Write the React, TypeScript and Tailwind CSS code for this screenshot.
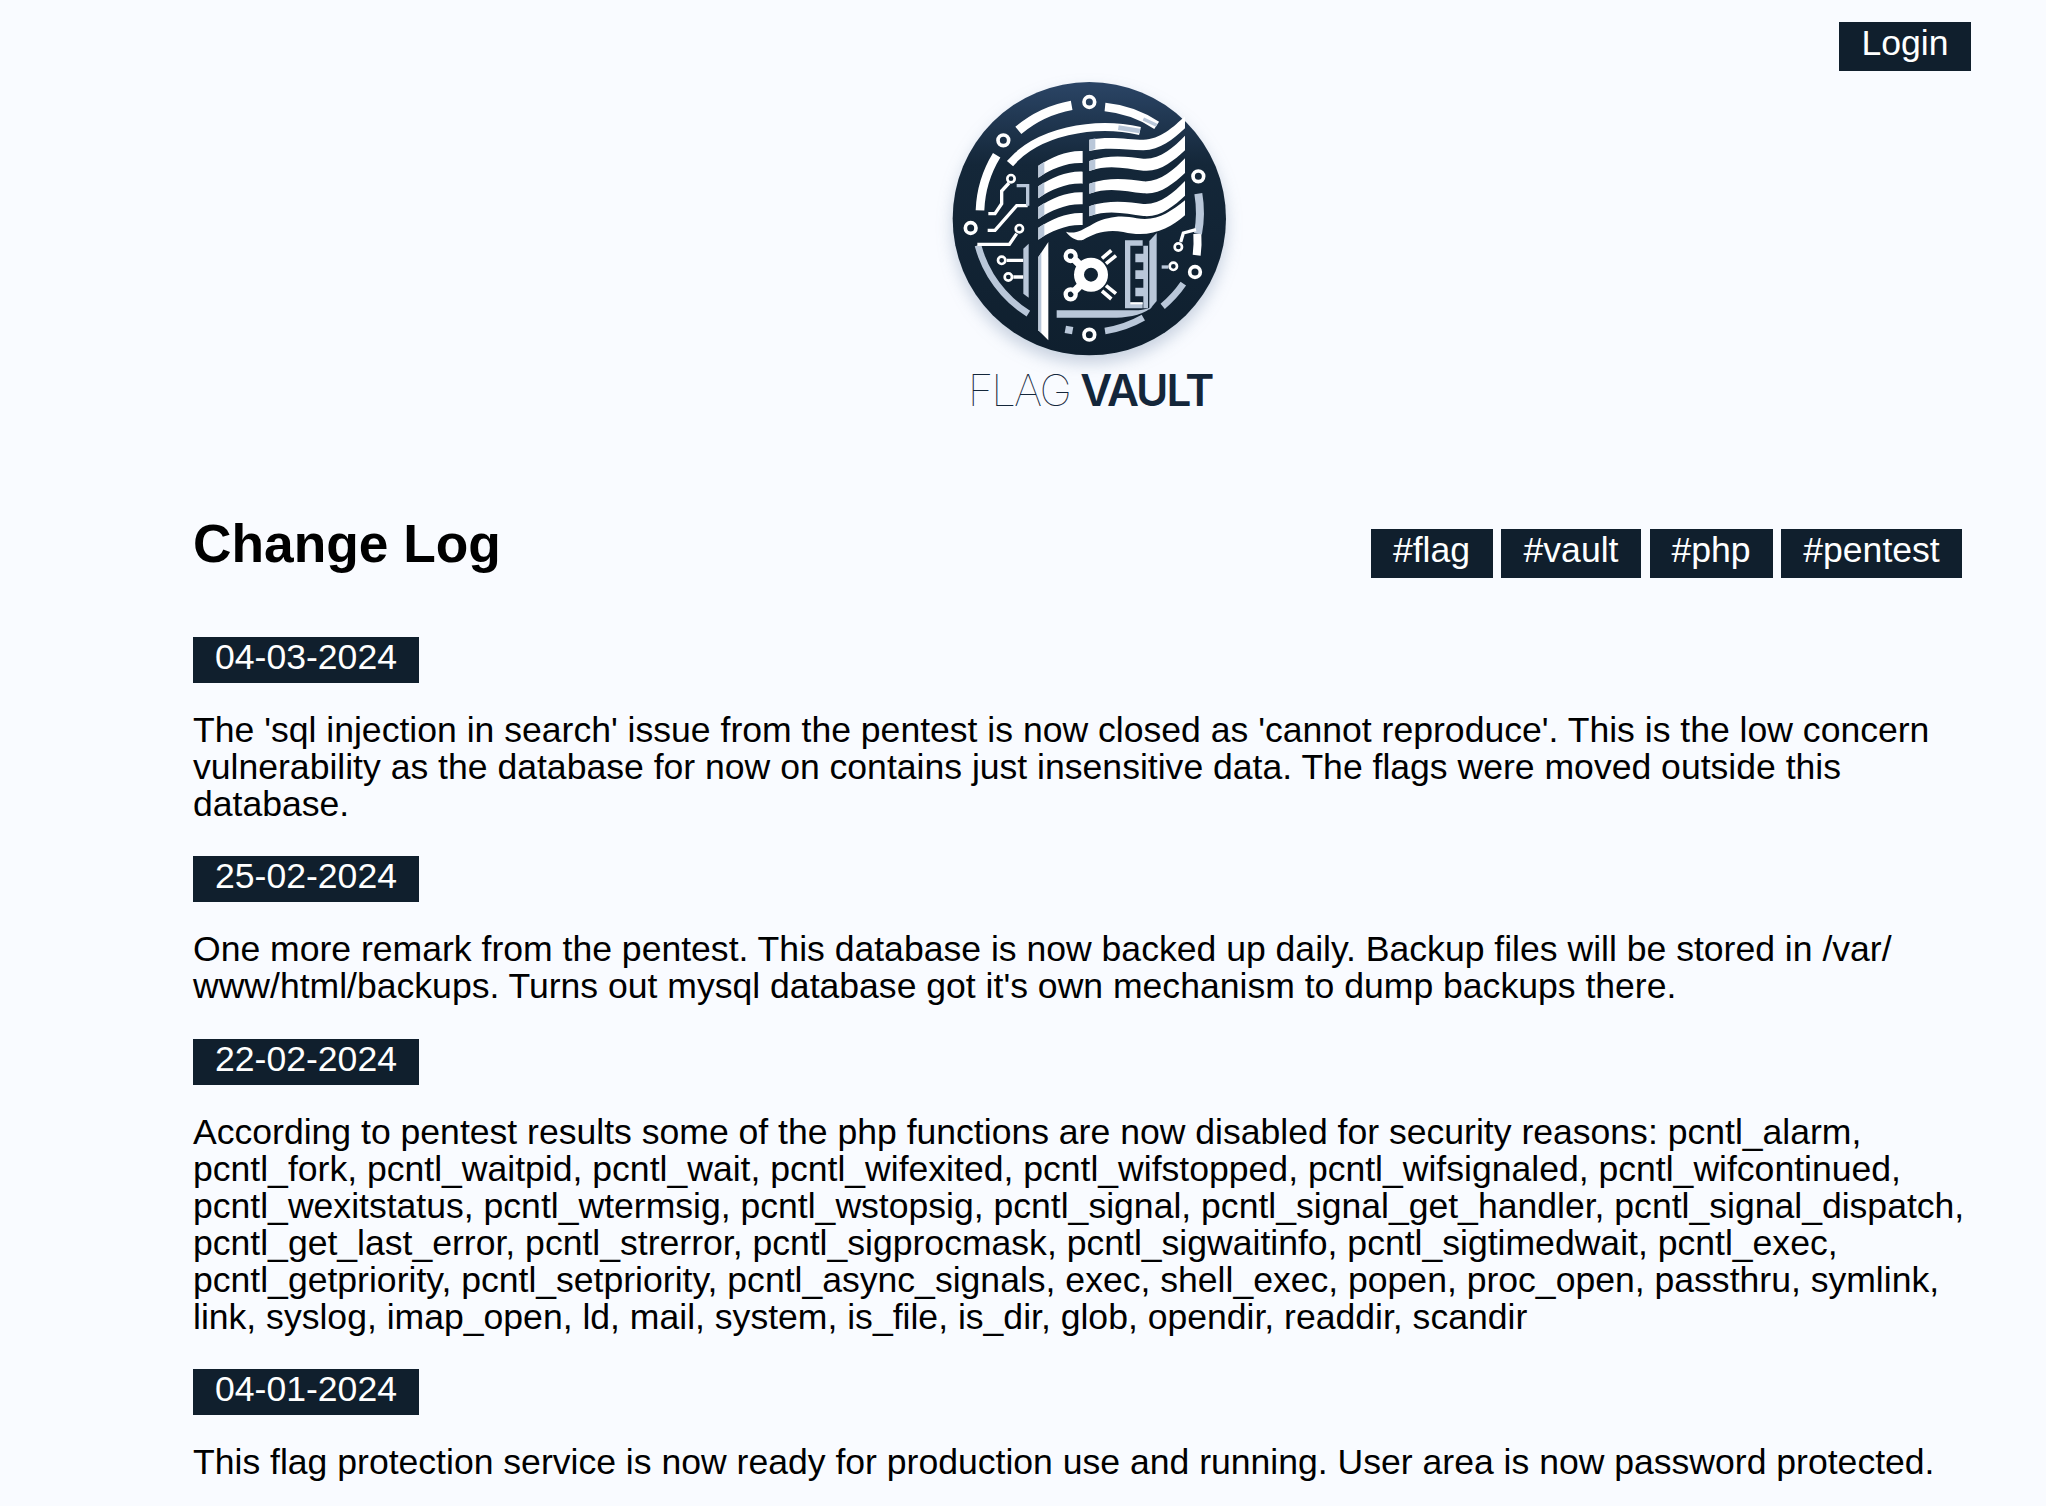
const sans = "font-['Liberation_Sans',Arial,sans-serif]"

const tags = [
  { label: "#flag", width: "w-[122px]" },
  { label: "#vault", width: "w-[140px]" },
  { label: "#php", width: "w-[123px]" },
  { label: "#pentest", width: "w-[181px]" },
]

const entries = [
  {
    date: "04-03-2024",
    text: "The 'sql injection in search' issue from the pentest is now closed as 'cannot reproduce'. This is the low concern vulnerability as the database for now on contains just insensitive data. The flags were moved outside this database.",
  },
  {
    date: "25-02-2024",
    text: "One more remark from the pentest. This database is now backed up daily. Backup files will be stored in /var/\u200bwww/html/backups. Turns out mysql database got it's own mechanism to dump backups there.",
  },
  {
    date: "22-02-2024",
    text: "According to pentest results some of the php functions are now disabled for security reasons: pcntl_alarm, pcntl_fork, pcntl_waitpid, pcntl_wait, pcntl_wifexited, pcntl_wifstopped, pcntl_wifsignaled, pcntl_wifcontinued, pcntl_wexitstatus, pcntl_wtermsig, pcntl_wstopsig, pcntl_signal, pcntl_signal_get_handler, pcntl_signal_dispatch, pcntl_get_last_error, pcntl_strerror, pcntl_sigprocmask, pcntl_sigwaitinfo, pcntl_sigtimedwait, pcntl_exec, pcntl_getpriority, pcntl_setpriority, pcntl_async_signals, exec, shell_exec, popen, proc_open, passthru, symlink, link, syslog, imap_open, ld, mail, system, is_file, is_dir, glob, opendir, readdir, scandir",
  },
  {
    date: "04-01-2024",
    text: "This flag protection service is now ready for production use and running. User area is now password protected.",
  },
]

const steel = "#b9c7d9"

// coordinates are 3x the on-page size
function Logo() {
  const rings: [number, number][] = [[688, 125], [430, 240], [1015, 348], [332, 503], [1005, 635], [688, 823]]
  const pads: [number, number][] = [[453, 355], [478, 505], [425, 600], [445, 650], [955, 560], [940, 618]]
  const leftBand = "M535 316C575 290 620 270 668 272V308C620 306 575 325 535 352Z"
  const leftShade = "M535 316L553 304V340L535 352Z"
  const rightBand = "M688 302C750 280 810 290 850 295C900 298 940 262 975 226V270C940 302 900 336 850 331C800 326 750 310 688 332Z"
  const rightShade = "M688 302L706 296V326L688 332Z"
  return (
    <svg viewBox="0 65 1380 900" className="w-[460px] h-[300px] shrink-0 drop-shadow-[0_8px_8px_rgba(70,100,140,0.28)]">
      <defs>
        <linearGradient id="disc" x1="0" y1="0" x2="0" y2="1">
          <stop offset="0" stopColor="#2b4566" />
          <stop offset="0.3" stopColor="#142739" />
          <stop offset="1" stopColor="#0f1f2e" />
        </linearGradient>
      </defs>
      <circle cx="688" cy="475" r="410" fill="url(#disc)" />

      <g fill="none" stroke="#ffffff" strokeWidth="24">
        <path d="M475 210A343 343 0 0 1 635 135" strokeWidth="28" />
        <path d="M735 140A340 340 0 0 1 890 195" strokeWidth="26" />
        <path d="M450 310C530 215 700 180 840 212" />
        <path d="M410 285A340 340 0 0 0 360 450" strokeWidth="26" />
        <path d="M1012 520A335 335 0 0 1 1010 585" strokeWidth="24" />
      </g>
      <g fill="none" stroke={steel} strokeWidth="20">
        <path d="M354 555A345 345 0 0 0 505 760" />
        <path d="M735 812A338 338 0 0 0 850 772" />
        <path d="M908 738A338 338 0 0 0 970 670" />
        <path d="M1015 400A340 340 0 0 1 1014 520" strokeWidth="24" />
        <path d="M775 202L840 212" strokeWidth="14" />
        <path d="M850 176L890 195" strokeWidth="10" />
      </g>

      {/* flag */}
      <path d="M688 238C750 226 810 238 850 238C900 238 940 200 975 168V204C940 236 900 270 850 270C800 270 750 258 688 272Z" fill="#ffffff" />
      <path d="M688 238L706 234V266L688 272Z" fill={steel} />
      {[0, 68, 136].map((dy) => (
        <g key={dy} transform={`translate(0 ${dy})`}>
          <path d={rightBand} fill="#ffffff" />
          <path d={rightShade} fill={steel} />
        </g>
      ))}
      <path d="M975 420V465C930 505 870 535 790 515C740 505 700 520 670 538C650 545 630 530 618 514C645 522 665 510 700 490C750 465 790 465 830 474C890 485 930 455 975 420Z" fill="#ffffff" />
      {[0, 62, 124, 186].map((dy) => (
        <g key={dy} transform={`translate(0 ${dy})`}>
          <path d={leftBand} fill="#ffffff" />
          <path d={leftShade} fill={steel} />
        </g>
      ))}

      {/* pole */}
      <path d="M535 590L565 545V840L535 810Z" fill="#ffffff" />
      <path d="M535 590L544 577V818L535 810Z" fill={steel} />

      {/* safe dial */}
      <circle cx="693" cy="643" r="36" fill="none" stroke="#ffffff" strokeWidth="30" />
      <g fill="none" stroke="#ffffff" strokeWidth="13" strokeLinecap="round">
        <circle cx="632" cy="587" r="15" />
        <circle cx="632" cy="702" r="15" />
        <path d="M646 600L664 618M646 690L664 672" strokeWidth="22" />
        <path d="M726 594L754 570M738 610L768 586M726 692L754 716M738 676L768 700" strokeWidth="11" strokeLinecap="butt" />
      </g>

      {/* vault door */}
      <path d="M795 540H848V556H811V726H848V744H795Z" fill={steel} />
      <path d="M850 556H864V744H850V708H826V682H850V656H826V630H850V606H826V580H850Z" fill={steel} />
      <path d="M811 726H848V732H811Z" fill="#ffffff" />
      <path d="M868 542L890 518V722L868 748Z" fill={steel} />
      <path d="M590 750H826C850 750 868 745 878 738C860 760 810 772 770 772H590Z" fill={steel} />
      <path d="M618 796L640 800L636 822L614 818Z" fill={steel} />

      {/* circuit traces */}
      <g fill="none" stroke="#ffffff" strokeWidth="10">
        <path d="M447 368L425 392V430L405 460H385" />
        <path d="M503 436H470L405 510H383" />
        <path d="M470 520L448 552H352" />
        <path d="M440 600H490M460 650H490" />
        <path d="M962 545L970 518L1008 508" />
      </g>
      <path d="M470 376H503V436" fill="none" stroke={steel} strokeWidth="10" />
      <path d="M490 565L506 550V712L490 700Z" fill={steel} />
      <path d="M905 620H925" stroke={steel} strokeWidth="10" />

      {rings.map(([cx, cy]) => (
        <circle key={`${cx}-${cy}`} cx={cx} cy={cy} r="16" fill="none" stroke="#ffffff" strokeWidth="11" />
      ))}
      {pads.map(([cx, cy]) => (
        <circle key={`${cx}-${cy}`} cx={cx} cy={cy} r="11" fill="none" stroke="#ffffff" strokeWidth="8" />
      ))}
    </svg>
  )
}

export default function App() {
  return (
    <div className={`${sans} min-h-[1506px] overflow-hidden bg-[#f9fbff] text-[35.57px] leading-[37px] text-black`}>
      <header className="flex items-start pt-[22px]">
        <div className="ml-[860px] mt-[60px] flex w-[460px] flex-col items-center">
          <Logo />
          <div className="mt-[-22px] font-['Inter',sans-serif] text-[44px] leading-[60px] tracking-[-2px] text-[#14263a]">
            <span className="font-thin">FLAG</span> <span className="font-semibold">VAULT</span>
          </div>
        </div>
        <a className="ml-auto mr-[75px] flex h-[49px] w-[132px] items-center justify-center bg-[#101f2d] pb-[6px] text-[#ffffff]">
          Login
        </a>
      </header>

      <main className="ml-[193px] mr-[78px] mt-[94px]">
        <div className="flex items-start justify-between">
          <h1 className="text-[53.3px] font-bold leading-[60px]">Change Log</h1>
          <div className="mr-[6px] mt-[15px] flex gap-[8.5px]">
            {tags.map((tag) => (
              <span key={tag.label} className={`${tag.width} flex h-[49px] items-center justify-center bg-[#101f2d] pb-[7px] text-[#ffffff]`}>
                {tag.label}
              </span>
            ))}
          </div>
        </div>

        <div className="mt-[59px] flex flex-col gap-[33.4px]">
          {entries.map((entry) => (
            <section key={entry.date}>
              <div className="flex h-[46px] w-[226px] items-center justify-center bg-[#101f2d] pb-[5px] text-[#ffffff]">
                {entry.date}
              </div>
              <p className="mt-[29px]">{entry.text}</p>
            </section>
          ))}
        </div>
      </main>
    </div>
  )
}
